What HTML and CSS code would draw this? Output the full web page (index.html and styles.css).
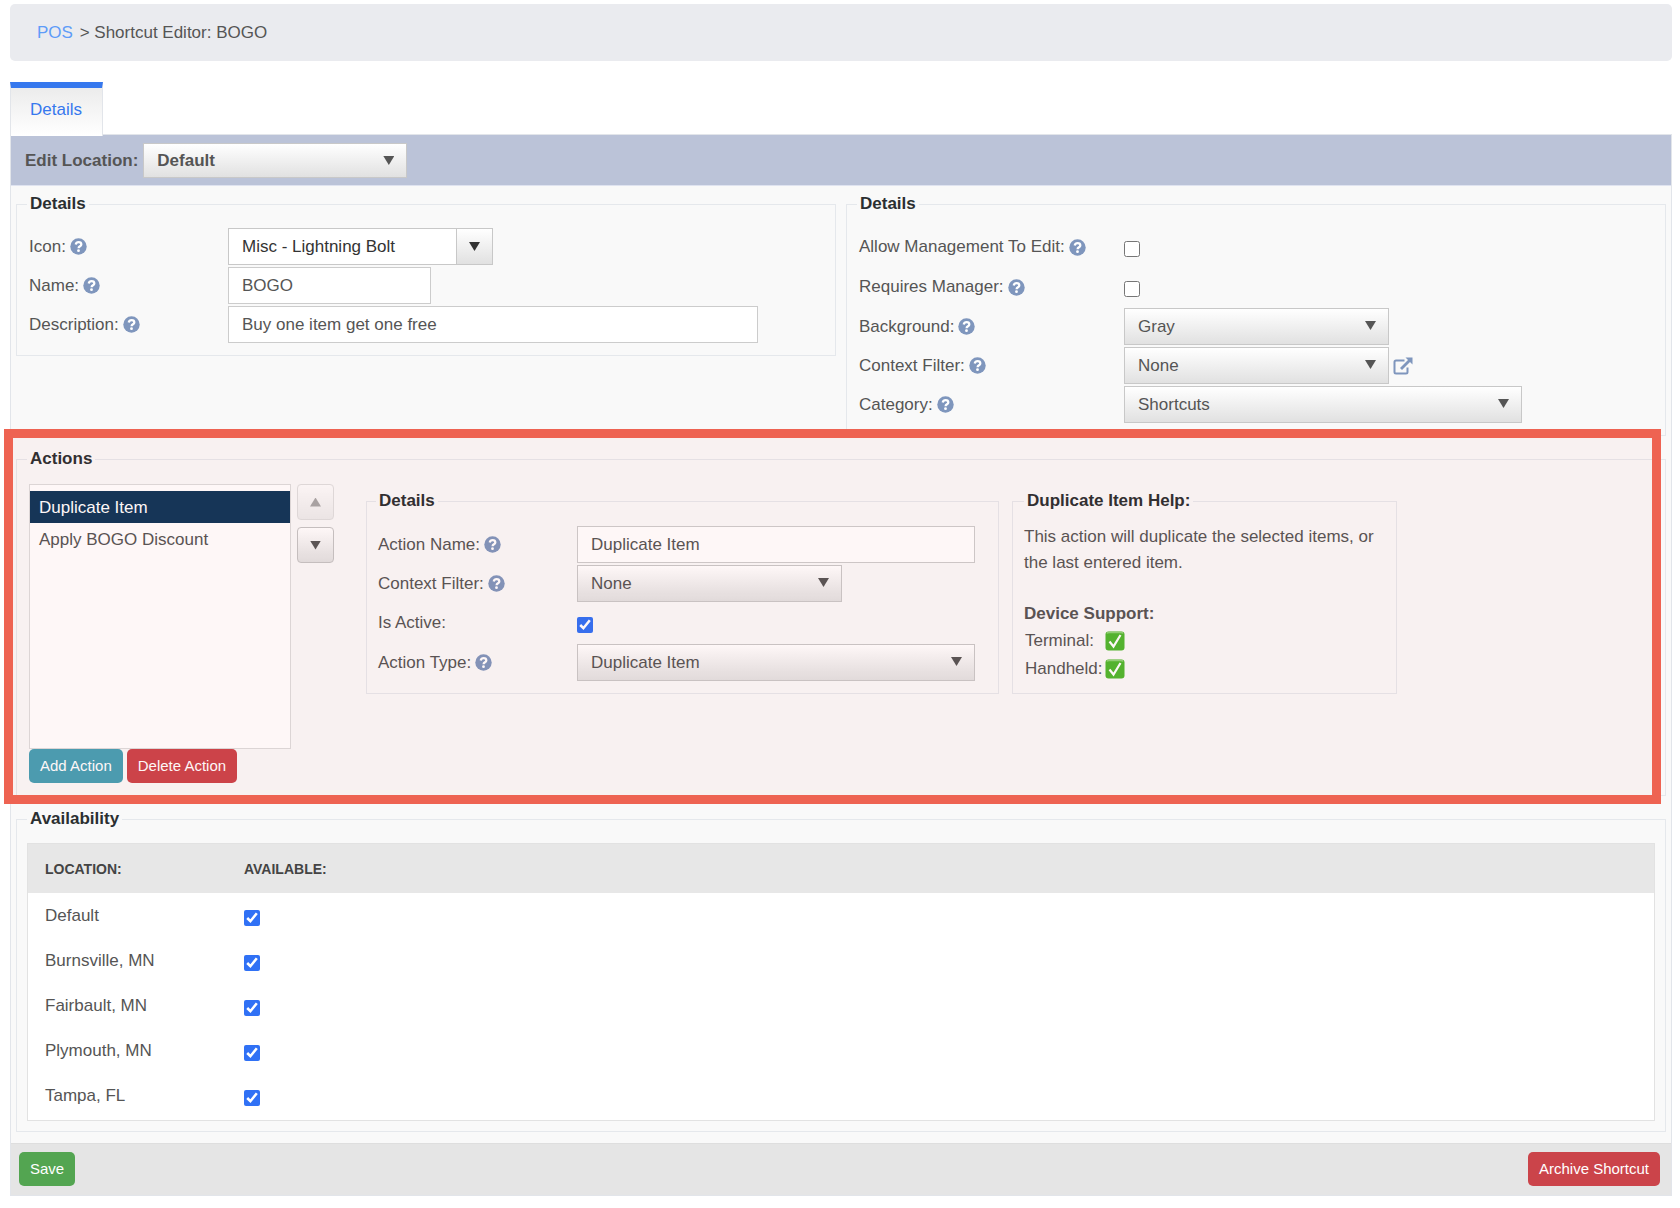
FILE: index.html
```html
<!DOCTYPE html>
<html lang="en">
<head>
  <meta charset="UTF-8">
  <meta name="viewport" content="width=device-width, initial-scale=1.0">
  <title>Shortcut Editor: BOGO</title>
  <link rel="stylesheet" href="styles.css">
</head>
<body>
  <!-- shared icons -->
  <svg class="sprite" aria-hidden="true">
    <symbol id="help" viewBox="0 0 17 17">
      <circle cx="8.5" cy="8.5" r="8.2" fill="#7f96bd"/>
      <path d="M5.7 6.500C6.100 5 7.200 4.200 8.600 4.200c1.600 0 2.700.9 2.700 2.200 0 1.900-2.700 1.900-2.700 3.800" fill="none" stroke="#fff" stroke-width="2.300"/>
      <circle cx="8.5" cy="12.700" r="1.400" fill="#fff"/>
    </symbol>
    <symbol id="supported" viewBox="0 0 20 20">
      <rect x="0.5" y="0.5" width="19" height="19" rx="3" fill="#4fb82f"/>
      <path d="M2 2.5Q2.5 1.5 4 1.5H16Q17.500 1.5 18 2.500" fill="none" stroke="#8fd478" stroke-width="1.500"/>
      <path d="M4.500 10.500 8.500 15.500 15.500 4" fill="none" stroke="#fff" stroke-width="2.200"/>
    </symbol>
  </svg>

  <nav class="breadcrumb">
    <a href="#">POS</a> <span>&gt; Shortcut Editor: BOGO</span>
  </nav>

  <div class="tabs">
    <a class="tab" href="#details">Details</a>
  </div>

  <form class="panel" id="details">
    <div class="location-bar">
      <label for="edit-location">Edit Location:</label>
      <div class="dropdown w-location">
        <select id="edit-location"><option>Default</option></select>
      </div>
    </div>

    <div class="panel-body">
      <div class="columns">
        <fieldset>
          <legend>Details</legend>
          <div class="row">
            <div class="label"><label for="icon">Icon:</label><svg class="help"><use href="#help"/></svg></div>
            <div class="combo w-medium">
              <input type="text" id="icon" value="Misc - Lightning Bolt">
              <button type="button" aria-label="Show icons"><span class="arrow"></span></button>
            </div>
          </div>
          <div class="row">
            <div class="label"><label for="name">Name:</label><svg class="help"><use href="#help"/></svg></div>
            <input type="text" class="textbox w-small" id="name" value="BOGO">
          </div>
          <div class="row">
            <div class="label"><label for="description">Description:</label><svg class="help"><use href="#help"/></svg></div>
            <input type="text" class="textbox w-xlarge" id="description" value="Buy one item get one free">
          </div>
        </fieldset>

        <fieldset class="wide-labels">
          <legend>Details</legend>
          <div class="row check-row">
            <div class="label"><label for="allow-edit">Allow Management To Edit:</label><svg class="help"><use href="#help"/></svg></div>
            <input type="checkbox" id="allow-edit">
          </div>
          <div class="row check-row">
            <div class="label"><label for="requires-manager">Requires Manager:</label><svg class="help"><use href="#help"/></svg></div>
            <input type="checkbox" id="requires-manager">
          </div>
          <div class="row">
            <div class="label"><label for="background">Background:</label><svg class="help"><use href="#help"/></svg></div>
            <div class="dropdown w-medium">
              <select id="background"><option>Gray</option></select>
            </div>
          </div>
          <div class="row">
            <div class="label"><label for="context-filter">Context Filter:</label><svg class="help"><use href="#help"/></svg></div>
            <div class="dropdown w-medium">
              <select id="context-filter"><option>None</option></select>
            </div>
            <a class="open-link" href="#" aria-label="Open context filter">
              <svg width="20" height="18" viewBox="0 0 20 18">
                <path d="M11.500 3.500H3Q1.500 3.500 1.500 5V15Q1.500 16.500 3 16.500H13Q14.500 16.500 14.500 15V10.500" fill="none" stroke="#7f96bd" stroke-width="2"/>
                <path d="M8 12 16.500 3.500" fill="none" stroke="#7f96bd" stroke-width="2.800"/>
                <path d="M12.500 0.500H19.500V7.500Z" fill="#7f96bd"/>
              </svg>
            </a>
          </div>
          <div class="row">
            <div class="label"><label for="category">Category:</label><svg class="help"><use href="#help"/></svg></div>
            <div class="dropdown w-large">
              <select id="category"><option>Shortcuts</option></select>
            </div>
          </div>
        </fieldset>
      </div>

      <div class="highlighted">
        <fieldset>
          <legend>Actions</legend>
          <div class="actions">
            <div class="action-picker">
              <ul class="action-list" role="listbox" aria-label="Actions">
                <li class="selected" role="option" aria-selected="true">Duplicate Item</li>
                <li role="option">Apply BOGO Discount</li>
              </ul>
              <div class="buttons">
                <button type="button" class="btn btn-info">Add Action</button>
                <button type="button" class="btn btn-danger">Delete Action</button>
              </div>
            </div>
            <div class="reorder">
              <button type="button" disabled aria-label="Move up"><span class="arrow up"></span></button>
              <button type="button" aria-label="Move down"><span class="arrow"></span></button>
            </div>

            <fieldset class="action-details">
              <legend>Details</legend>
              <div class="row">
                <div class="label"><label for="action-name">Action Name:</label><svg class="help"><use href="#help"/></svg></div>
                <input type="text" class="textbox w-large" id="action-name" value="Duplicate Item">
              </div>
              <div class="row">
                <div class="label"><label for="action-filter">Context Filter:</label><svg class="help"><use href="#help"/></svg></div>
                <div class="dropdown w-medium">
                  <select id="action-filter"><option>None</option></select>
                </div>
              </div>
              <div class="row check-row">
                <div class="label"><label for="is-active">Is Active:</label></div>
                <input type="checkbox" id="is-active" checked>
              </div>
              <div class="row">
                <div class="label"><label for="action-type">Action Type:</label><svg class="help"><use href="#help"/></svg></div>
                <div class="dropdown w-large">
                  <select id="action-type"><option>Duplicate Item</option></select>
                </div>
              </div>
            </fieldset>

            <fieldset class="action-help">
              <legend>Duplicate Item Help:</legend>
              <p>This action will duplicate the selected items, or the last entered item.</p>
              <h3>Device Support:</h3>
              <table class="devices">
                <tr><td>Terminal:</td><td><svg width="20" height="20" role="img" aria-label="Yes"><use href="#supported"/></svg></td></tr>
                <tr><td>Handheld:</td><td><svg width="20" height="20" role="img" aria-label="Yes"><use href="#supported"/></svg></td></tr>
              </table>
            </fieldset>
          </div>
        </fieldset>
        <div class="highlight-box"></div>
      </div>

      <fieldset>
        <legend>Availability</legend>
        <div class="availability">
          <table>
            <thead>
              <tr><th class="location">LOCATION:</th><th>AVAILABLE:</th></tr>
            </thead>
            <tbody>
              <tr><td><label for="loc-default">Default</label></td><td><input type="checkbox" id="loc-default" checked></td></tr>
              <tr><td><label for="loc-burnsville">Burnsville, MN</label></td><td><input type="checkbox" id="loc-burnsville" checked></td></tr>
              <tr><td><label for="loc-fairbault">Fairbault, MN</label></td><td><input type="checkbox" id="loc-fairbault" checked></td></tr>
              <tr><td><label for="loc-plymouth">Plymouth, MN</label></td><td><input type="checkbox" id="loc-plymouth" checked></td></tr>
              <tr><td><label for="loc-tampa">Tampa, FL</label></td><td><input type="checkbox" id="loc-tampa" checked></td></tr>
            </tbody>
          </table>
        </div>
      </fieldset>
    </div>

    <div class="panel-footer">
      <button type="submit" class="btn btn-success">Save</button>
      <button type="button" class="btn btn-danger">Archive Shortcut</button>
    </div>
  </form>
</body>
</html>
```
FILE: styles.css
```css
* {
  box-sizing: border-box;
}
body {
  margin: 0;
  padding: 4px 8px 0 10px;
  background: #fff;
  color: #555;
  font-family: "Liberation Sans", Arial, sans-serif;
  font-size: 17px;
  line-height: 20px;
}
input, select, button {
  font: inherit;
  color: inherit;
}
.sprite {
  display: none;
}

/* breadcrumb and tabs */
.breadcrumb {
  padding: 19px 27px 18px;
  background: #eaebef;
  border-radius: 5px;
}
.breadcrumb a {
  color: #5e9cf8;
  text-decoration: none;
}
.breadcrumb span {
  margin-left: 2px;
}
.tabs {
  display: flex;
  margin-top: 21px;
}
.tab {
  position: relative;
  margin-bottom: -2px;
  padding: 12px 20px 16px 19px;
  border: 1px solid #e2e5ea;
  border-top: 6px solid #3678ee;
  border-bottom: 0;
  background: linear-gradient(#ececec, #fff);
  color: #3678ee;
  text-decoration: none;
}

/* main panel */
.panel {
  border: 1px solid #e2e5ea;
  background: #f9f9f9;
}
.location-bar {
  display: flex;
  align-items: center;
  gap: 5px;
  padding: 8px 14px 7px;
  border-bottom: 1px solid #dfe3f0;
  background: #bbc3d8;
  font-weight: bold;
}
.panel-body {
  display: flex;
  flex-direction: column;
  gap: 13px;
  padding: 8px 5px 11px;
}
.columns {
  display: grid;
  grid-template-columns: 1fr 1fr;
  gap: 10px;
  align-items: start;
}
fieldset {
  min-width: 0;
  margin: 0;
  padding: 14px 10px 10px;
  border: 1px solid #e5e8ec;
}
legend {
  padding: 0 3px;
  color: #2b2f31;
  font-weight: bold;
}

/* form rows */
.row {
  display: flex;
  align-items: center;
  height: 39px;
  padding: 0 0 2px 2px;
}
.check-row {
  height: 40px;
}
.label {
  display: flex;
  flex: none;
  align-items: center;
  gap: 4px;
  width: 199px;
}
.wide-labels .label {
  width: 265px;
}
.help {
  width: 17px;
  height: 17px;
}
.w-small { width: 203px; }
.w-location { width: 264px; }
.w-medium { width: 265px; }
.w-large { width: 398px; }
.w-xlarge { width: 530px; }

input[type="checkbox"] {
  width: 16px;
  height: 16px;
  margin: 4px 0 0;
  accent-color: #3071f5;
}
.textbox {
  height: 37px;
  padding: 0 13px;
  border: 1px solid #ccc;
  background: #fff;
}
.dropdown {
  position: relative;
}
.dropdown select {
  display: block;
  width: 100%;
  height: 37px;
  padding: 0 13px;
  border: 1px solid #c8c8c8;
  border-radius: 0;
  background: linear-gradient(#fff, #e1e1e1);
  appearance: none;
}
.location-bar select {
  height: 35px;
  font-weight: bold;
}
.arrow,
.dropdown::after {
  width: 11px;
  height: 9px;
  background: #555;
  clip-path: polygon(0 0, 100% 0, 50% 100%);
}
.dropdown::after {
  content: "";
  position: absolute;
  top: 13px;
  right: 13px;
  pointer-events: none;
}
.arrow {
  display: block;
}
.arrow.up {
  clip-path: polygon(50% 0, 100% 100%, 0 100%);
}
.combo {
  display: flex;
  height: 37px;
  border: 1px solid #c8c8c8;
  background: #fff;
  color: #333;
}
.combo input {
  flex: 1;
  min-width: 0;
  padding: 0 13px;
  border: 0;
  background: none;
}
.combo button {
  display: flex;
  align-items: center;
  justify-content: center;
  width: 36px;
  padding: 0;
  border: 0;
  border-left: 1px solid #c8c8c8;
  background: linear-gradient(#fff, #e1e1e1);
}
.combo .arrow {
  background: #333;
}
.open-link {
  display: flex;
  margin-left: 4px;
}

/* actions */
.highlighted {
  position: relative;
}
.highlight-box {
  position: absolute;
  top: -20px;
  right: 5px;
  bottom: -8px;
  left: -12px;
  border: 9px solid #ee6352;
  background: rgba(220, 60, 60, 0.04);
  background-clip: padding-box;
  pointer-events: none;
}
.actions {
  display: flex;
  align-items: flex-start;
  padding: 1px 2px 2px;
}
.action-picker {
  flex: none;
  width: 262px;
}
.action-list {
  height: 265px;
  margin: 0;
  padding: 6px 0 0;
  border: 1px solid #dcdcdc;
  background: #fff;
  list-style: none;
}
.action-list li {
  padding: 7px 9px 5px;
}
.action-list .selected {
  background: #0e3659;
  color: #fff;
}
.buttons {
  display: flex;
  gap: 4px;
}
.reorder {
  display: flex;
  flex-direction: column;
  gap: 7px;
  margin: 0 32px 0 6px;
}
.reorder button {
  display: flex;
  align-items: center;
  justify-content: center;
  width: 37px;
  height: 36px;
  padding: 0;
  border: 1px solid #c4c4c4;
  border-radius: 4px;
  background: linear-gradient(#fff, #e1e1e1);
}
.reorder button:disabled {
  opacity: 0.5;
}
.action-details,
.action-help {
  margin-top: 7px;
}
.action-details {
  width: 633px;
  margin-right: 13px;
  padding: 15px 9px 10px;
}
.action-help {
  width: 385px;
  padding: 13px 11px 10px;
  line-height: 26px;
}
.action-help legend {
  line-height: 20px;
}
.action-help p {
  margin: 0 0 25px;
}
.action-help h3 {
  margin: 0;
  font-size: 17px;
}
.devices {
  border-collapse: collapse;
}
.devices td {
  height: 28px;
  padding: 0 1px;
}
.devices svg {
  display: block;
}

/* buttons */
.btn {
  height: 34px;
  padding: 0 11px;
  border: 0;
  border-radius: 5px;
  color: #fff;
  font-size: 15px;
}
.btn-info { background: #46a0b5; }
.btn-danger { background: #cb444a; }
.btn-success { background: #53a551; }

/* availability table */
.availability {
  padding-bottom: 2px;
  border: 1px solid #e2e2e2;
  background: #fff;
}
.availability table {
  width: 100%;
  border-collapse: collapse;
}
.availability th {
  height: 49px;
  padding: 0 17px;
  background: #e7e7e7;
  color: #444;
  font-size: 14px;
  text-align: left;
}
.availability .location {
  width: 199px;
}
.availability td {
  height: 45px;
  padding: 0 17px;
}
.availability input {
  display: block;
}
.panel-footer {
  display: flex;
  justify-content: space-between;
  padding: 8px 11px 9px 8px;
  border-top: 1px solid #dedede;
  background: #e5e5e5;
}
```
